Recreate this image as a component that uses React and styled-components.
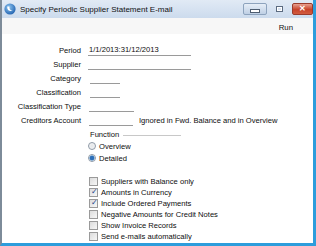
import styled, { createGlobalStyle } from "styled-components";

const Global = createGlobalStyle`
  body {
    margin: 0;
    background: #fff;
    font-family: "Liberation Sans", Arial, sans-serif;
  }
`;

const fields = [
  { label: "Period", value: "1/1/2013:31/12/2013", width: 103 },
  { label: "Supplier", value: "", width: 103 },
  { label: "Category", value: "", width: 30, offset: 2 },
  { label: "Classification", value: "", width: 30, offset: 2 },
  { label: "Classification Type", value: "", width: 45, offset: 1 },
  {
    label: "Creditors Account",
    value: "",
    width: 44,
    offset: 1,
    note: "Ignored in Fwd. Balance and in Overview",
  },
];

const options = [
  { label: "Suppliers with Balance only", checked: false },
  { label: "Amounts in Currency", checked: true },
  { label: "Include Ordered Payments", checked: true },
  { label: "Negative Amounts for Credit Notes", checked: false },
  { label: "Show Invoice Records", checked: false },
  { label: "Send e-mails automatically", checked: false },
];

function AppIcon() {
  return (
    <svg width="12" height="12" viewBox="0 0 12 12">
      <defs>
        <radialGradient id="g" cx="40%" cy="35%" r="70%">
          <stop offset="0" stopColor="#8cc4f0" />
          <stop offset="1" stopColor="#1d5fae" />
        </radialGradient>
      </defs>
      <circle cx="6" cy="6" r="5.6" fill="url(#g)" />
      <path d="M3.2 3.4 C3 7 5.5 9 9.2 7.6 C7 8 5 6.6 5.4 3.6 Z" fill="#fff" />
    </svg>
  );
}

function App() {
  return (
    <Window>
      <Global />
      <TitleBar>
        <AppIcon />
        <Title>Specify Periodic Supplier Statement E-mail</Title>
        <Controls>
          <CtrlButton $w={24}>
            <MinGlyph />
          </CtrlButton>
          <CtrlButton $w={17} $plain>
            <MaxGlyph />
          </CtrlButton>
          <CtrlButton $w={21} $close>
            <CloseGlyph>✕</CloseGlyph>
          </CtrlButton>
        </Controls>
      </TitleBar>

      <Toolbar>
        <ToolAction>Run</ToolAction>
      </Toolbar>

      <Content>
        <Form>
          {fields.map((f) => (
            <Row key={f.label}>
              <Label>{f.label}</Label>
              <FieldCell>
                <Field $w={f.width} $offset={f.offset || 0}>
                  {f.value}
                </Field>
                {f.note && <Note>{f.note}</Note>}
              </FieldCell>
            </Row>
          ))}
        </Form>

        <Group>
          <GroupHead>
            <span>Function</span>
            <GroupRule />
          </GroupHead>
          <Choice>
            <Radio />
            Overview
          </Choice>
          <Choice>
            <Radio $on />
            Detailed
          </Choice>
        </Group>

        <Checks>
          {options.map((o) => (
            <CheckRow key={o.label}>
              <Box>{o.checked && <Tick>✓</Tick>}</Box>
              {o.label}
            </CheckRow>
          ))}
        </Checks>
      </Content>
    </Window>
  );
}

const Window = styled.div`
  width: 316px;
  height: 246px;
  box-sizing: border-box;
  display: flex;
  flex-direction: column;
  background: #fff;
  border-left: 2px solid #7d8b99;
  border-right: 3px solid #2d9ddc;
  border-bottom: 3px solid #2d9ddc;
  overflow: hidden;
  color: #0d0d0d;
  font-size: 7.6px;
`;

const TitleBar = styled.div`
  height: 18px;
  flex: none;
  display: flex;
  align-items: center;
  padding-left: 2px;
  background: linear-gradient(#e1eaf5, #ccdbed);
`;

const Title = styled.div`
  margin-left: 4px;
  font-size: 8px;
  color: #111;
  flex: 1;
  white-space: nowrap;
`;

const Controls = styled.div`
  display: flex;
  align-items: flex-start;
  gap: 4px;
  align-self: flex-start;
  margin-top: 3px;
`;

const CtrlButton = styled.div`
  width: ${(p) => p.$w}px;
  height: 12px;
  box-sizing: border-box;
  display: flex;
  align-items: center;
  justify-content: center;
  border-radius: 2px;
  border: 1px solid ${(p) => (p.$close ? "#9a3b2c" : p.$plain ? "transparent" : "#8da3bd")};
  background: ${(p) =>
    p.$close
      ? "linear-gradient(#e8a08f, #c8432b 55%, #d15b3f)"
      : p.$plain
      ? "transparent"
      : "linear-gradient(#e6eef7, #bfd0e5)"};
`;

const MinGlyph = styled.div`
  width: 8px;
  height: 2px;
  margin-top: 3px;
  background: #fff;
  border: 1px solid #4e5d70;
`;

const MaxGlyph = styled.div`
  width: 5px;
  height: 4px;
  border: 1px solid #5b6b80;
  box-shadow: inset 0 0 0 1px #fff;
`;

const CloseGlyph = styled.span`
  color: #fff;
  font-size: 8px;
  font-weight: bold;
  line-height: 1;
`;

const Toolbar = styled.div`
  height: 16px;
  flex: none;
  display: flex;
  align-items: center;
  justify-content: flex-end;
  padding-right: 20px;
  background: #f7f7f7;
`;

const ToolAction = styled.span`
  font-size: 7.8px;
  color: #111;
  margin-top: 2px;
`;

const Content = styled.div`
  flex: 1;
  display: flex;
  flex-direction: column;
  padding-top: 9px;
`;

const Form = styled.div`
  display: grid;
  grid-template-columns: 79px 1fr;
  column-gap: 7px;
  grid-auto-rows: 14px;
`;

const Row = styled.div`
  display: contents;
`;

const Label = styled.div`
  text-align: right;
  align-self: center;
  white-space: nowrap;
`;

const FieldCell = styled.div`
  display: flex;
  align-items: center;
`;

const Field = styled.div`
  width: ${(p) => p.$w}px;
  margin-left: ${(p) => p.$offset}px;
  height: 11px;
  box-sizing: border-box;
  padding-left: 1px;
  line-height: 10px;
  border-bottom: 1px solid #9a9a9a;
  white-space: nowrap;
`;

const Note = styled.span`
  margin-left: 6px;
  white-space: nowrap;
`;

const Group = styled.div`
  display: flex;
  flex-direction: column;
  padding-left: 86px;
  margin-top: 1px;
`;

const GroupHead = styled.div`
  display: flex;
  align-items: center;
  gap: 4px;
  height: 12px;
  padding-left: 2px;
`;

const GroupRule = styled.div`
  width: 58px;
  height: 1px;
  margin-top: 3px;
  background: #c8c8c8;
`;

const Choice = styled.div`
  display: flex;
  align-items: center;
  gap: 3px;
  height: 12px;
`;

const Radio = styled.span`
  width: 8px;
  height: 8px;
  box-sizing: border-box;
  border-radius: 50%;
  border: 1px solid #8e99a6;
  background: ${(p) =>
    p.$on
      ? "radial-gradient(circle, #2e6fb8 0 2px, #9ec6ea 2.6px, #eef3f8 3px)"
      : "radial-gradient(circle, #e4e6e9, #f6f7f8)"};
`;

const Checks = styled.div`
  display: flex;
  flex-direction: column;
  padding-left: 87px;
  margin-top: 11.5px;
`;

const CheckRow = styled.div`
  display: flex;
  align-items: center;
  gap: 3px;
  height: 11px;
  white-space: nowrap;
`;

const Box = styled.span`
  position: relative;
  width: 9px;
  height: 9px;
  box-sizing: border-box;
  border: 1px solid #9a9a9a;
  background: linear-gradient(135deg, #dcdcdc, #f7f7f7);
`;

const Tick = styled.span`
  position: absolute;
  left: 1px;
  top: -2px;
  font-size: 8px;
  color: #21408a;
`;

export default App;
